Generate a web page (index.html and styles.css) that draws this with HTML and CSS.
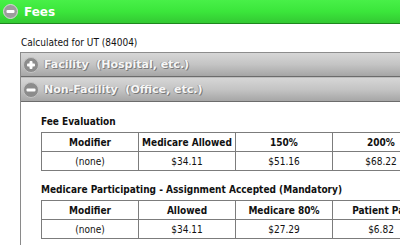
FILE: index.html
```
<!DOCTYPE html>
<html lang="en">
<head>
  <meta charset="UTF-8" />
  <title>Fees</title>
  <link rel="stylesheet" href="styles.css">
</head>
<body>
  <div class="panel-head">
    <span class="toggle toggle-green">
      <svg width="15" height="15" viewBox="0 0 15 15"><circle cx="7.5" cy="7.5" r="7" fill="#9c9c9c" stroke="#d8d8d8" stroke-width="1"/><rect x="3.5" y="6" width="8" height="3" rx="1" fill="#fff"/></svg>
    </span>
    <span class="panel-title">Fees</span>
  </div>

  <div class="panel-body">
    <p class="calc">Calculated for UT (84004)</p>

    <div class="sections">
      <div class="bar">
        <svg width="16" height="16" viewBox="0 0 16 16"><circle cx="8" cy="8" r="7.5" fill="#8c8c8c" stroke="#c4c4c4" stroke-width="1"/><rect x="4" y="6.5" width="8" height="3" rx="1" fill="#fff"/><rect x="6.5" y="4" width="3" height="8" rx="1" fill="#fff"/></svg>
        <span class="bar-title">Facility&nbsp; (Hospital, etc.)</span>
      </div>
      <div class="bar">
        <svg width="16" height="16" viewBox="0 0 16 16"><circle cx="8" cy="8" r="7.5" fill="#8c8c8c" stroke="#c4c4c4" stroke-width="1"/><rect x="3.5" y="6.5" width="9" height="3" rx="1" fill="#fff"/></svg>
        <span class="bar-title">Non-Facility&nbsp; (Office, etc.)</span>
      </div>

      <div class="section-content">
        <h3>Fee Evaluation</h3>
        <table class="fees">
          <tr><th>Modifier</th><th>Medicare Allowed</th><th>150%</th><th>200%</th></tr>
          <tr><td>(none)</td><td>$34.11</td><td>$51.16</td><td>$68.22</td></tr>
        </table>

        <h3>Medicare Participating - Assignment Accepted (Mandatory)</h3>
        <table class="fees">
          <tr><th>Modifier</th><th>Allowed</th><th>Medicare 80%</th><th>Patient Pay</th></tr>
          <tr><td>(none)</td><td>$34.11</td><td>$27.29</td><td>$6.82</td></tr>
        </table>
      </div>
    </div>
  </div>
</body>
</html>
```

FILE: styles.css
```
* {
  box-sizing: border-box;
}

body {
  margin: 0;
  font-family: "DejaVu Sans Condensed", "DejaVu Sans", sans-serif;
  font-size: 10px;
  color: #111;
  background: #fff;
  overflow: hidden;
  width: 400px;
  height: 245px;
}

.panel-head {
  height: 24px;
  display: flex;
  align-items: center;
  padding-left: 3px;
  background: linear-gradient(#48f048, #3be63b 50%, #33c933);
  border-bottom: 1px solid #1e861e;
}

.toggle svg {
  display: block;
}

.panel-title {
  margin-left: 6px;
  color: #fff;
  font-family: "DejaVu Sans", sans-serif;
  font-weight: bold;
  font-size: 12px;
}

.panel-body {
  padding-left: 20px;
}

.calc {
  margin: 0;
  padding: 12px 0 3px 1px;
  line-height: 13px;
}

.sections {
  border-left: 1px solid #8a8a8a;
  width: 420px;
  min-height: 200px;
}

.bar {
  height: 25px;
  display: flex;
  align-items: center;
  padding-left: 2px;
  border-top: 1px solid #8c8c8c;
  border-bottom: 1px solid #6c6c6c;
  background: linear-gradient(#d6d6d6, #c4c4c4 50%, #a6a6a6);
}

.bar + .bar {
  border-top: 1px solid #bdbdbd;
}

.bar svg {
  display: block;
}

.bar-title {
  margin-left: 5px;
  font-family: "DejaVu Sans", sans-serif;
  font-weight: bold;
  font-size: 11px;
  color: #f6f6f6;
  text-shadow: 1px 1px 0 #7a7a7a, -1px 0 0 #9a9a9a;
  white-space: nowrap;
}

.section-content {
  padding: 13px 0 0 20px;
}

h3 {
  margin: 0 0 4px;
  font-size: 10px;
  line-height: 13px;
  font-weight: bold;
  white-space: nowrap;
}

.fees {
  border-collapse: collapse;
  table-layout: fixed;
  width: 388px;
  margin-bottom: 12px;
}

.fees th,
.fees td {
  width: 97px;
  height: 19px;
  padding: 0;
  border: 1px solid #7c7c7c;
  text-align: center;
  white-space: nowrap;
  overflow: hidden;
}

.fees th {
  font-weight: bold;
}

.fees td {
  font-weight: normal;
}
```
